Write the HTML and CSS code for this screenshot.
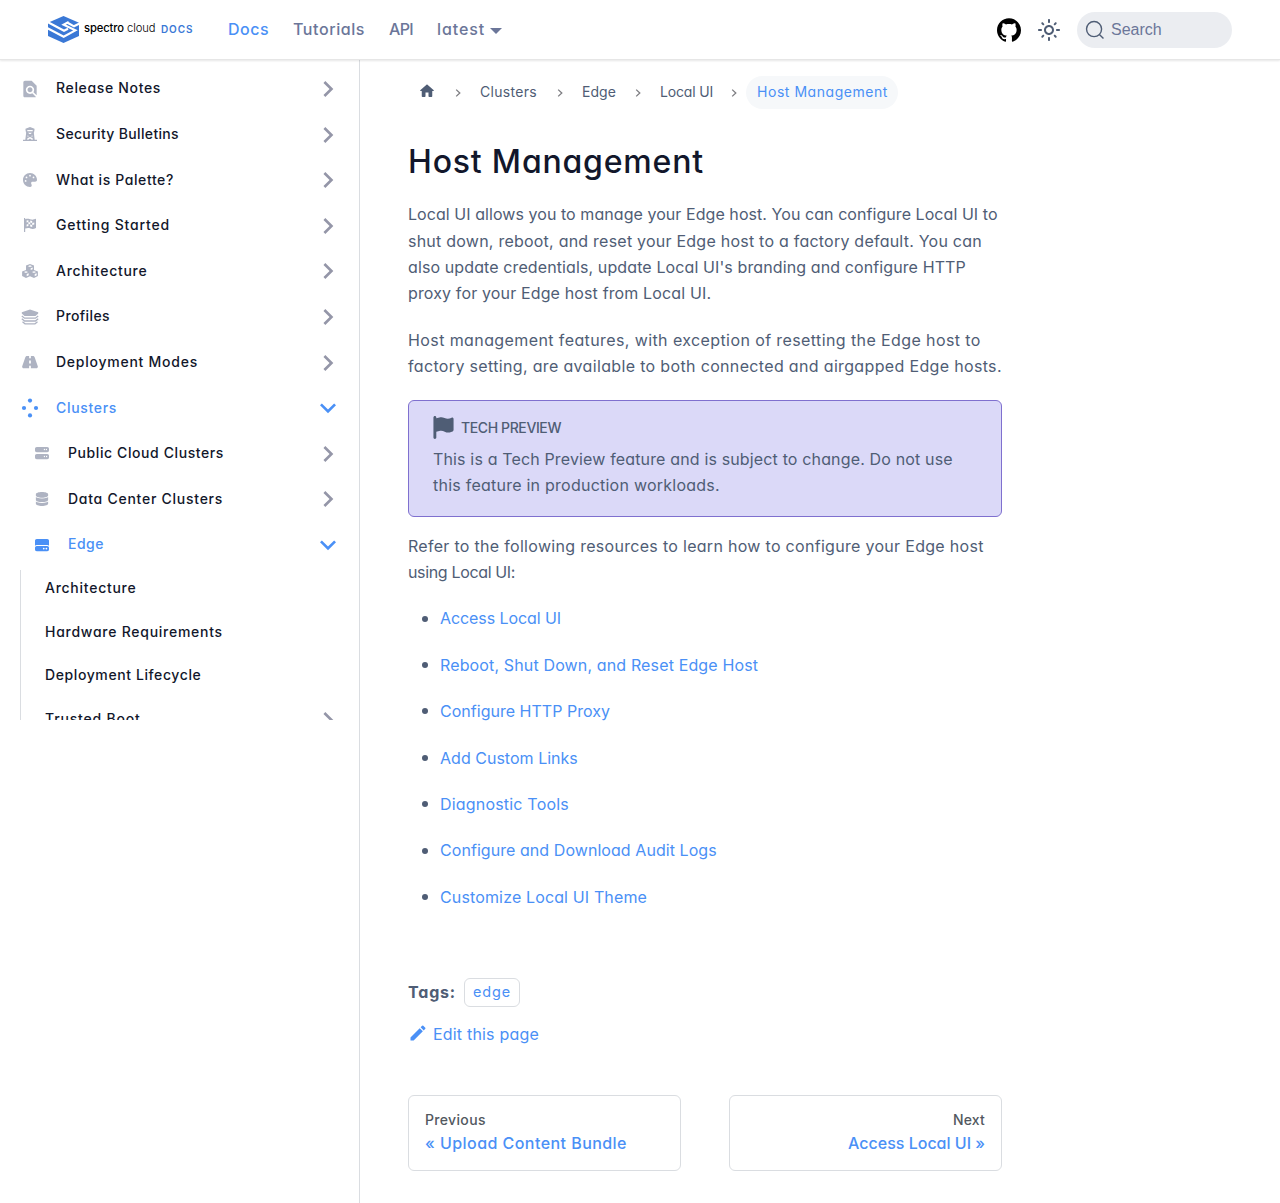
FILE: index.html
```html
<!DOCTYPE html>
<html lang="en">
<head>
<meta charset="utf-8">
<title>Host Management | Palette</title>
<link rel="stylesheet" href="styles.css">
</head>
<body>
<svg class="defs" width="0" height="0">
  <symbol id="caret" viewBox="0 0 24 24"><path d="M7.41 15.41L12 10.83l4.59 4.58L18 14l-6-6-6 6z"/></symbol>
  <symbol id="sep" viewBox="0 0 8 10"><path d="M2.2 1.6L5.8 5 2.2 8.4" fill="none" stroke="#7d7d82" stroke-width="1.3"/></symbol>
</svg>
<header class="navbar">
  <a class="brand">
    <svg class="mark" viewBox="0 0 93 81"><path fill="#3a78d6" d="M46.500 0L93 20V60L46.500 81L0 60V20z"/><path fill="none" stroke="#fff" stroke-width="6.500" d="M-3 36L47 62L82 43L47 26L62 18M96 22L78 31L60 21M-3 17L48 44L60 38"/></svg>
    <span class="word"><b>spectro</b> cloud</span><span class="docs">DOCS</span>
  </a>
  <nav class="links">
    <a class="active ls-48">Docs</a><a class="ls-58">Tutorials</a><a class="ls-m66">API</a><a class="ls-89 drop">latest</a>
  </nav>
  <div class="tools">
    <svg class="github" viewBox="0 0 24 24"><path d="M12 .297c-6.63 0-12 5.373-12 12 0 5.303 3.438 9.8 8.205 11.385.6.113.82-.258.82-.577 0-.285-.01-1.04-.015-2.04-3.338.724-4.042-1.61-4.042-1.61C4.422 18.07 3.633 17.7 3.633 17.7c-1.087-.744.084-.729.084-.729 1.205.084 1.838 1.236 1.838 1.236 1.07 1.835 2.809 1.305 3.495.998.108-.776.417-1.305.76-1.605-2.665-.3-5.466-1.332-5.466-5.93 0-1.31.465-2.38 1.235-3.22-.135-.303-.54-1.523.105-3.176 0 0 1.005-.322 3.3 1.23.96-.267 1.98-.399 3-.405 1.02.006 2.04.138 3 .405 2.28-1.552 3.285-1.23 3.285-1.23.645 1.653.24 2.873.12 3.176.765.84 1.23 1.91 1.23 3.22 0 4.61-2.805 5.625-5.475 5.92.42.36.81 1.096.81 2.22 0 1.606-.015 2.896-.015 3.286 0 .315.21.69.825.57C20.565 22.092 24 17.592 24 12.297c0-6.627-5.373-12-12-12"/></svg>
    <svg class="sun" viewBox="0 0 24 24"><path d="M12,9c1.65,0,3,1.35,3,3s-1.35,3-3,3s-3-1.35-3-3S10.35,9,12,9 M12,7c-2.76,0-5,2.24-5,5s2.24,5,5,5s5-2.24,5-5 S14.76,7,12,7L12,7z M2,13l2,0c0.55,0,1-0.45,1-1s-0.45-1-1-1l-2,0c-0.55,0-1,0.45-1,1S1.45,13,2,13z M20,13l2,0c0.55,0,1-0.45,1-1 s-0.45-1-1-1l-2,0c-0.55,0-1,0.45-1,1S19.45,13,20,13z M11,2v2c0,0.55,0.45,1,1,1s1-0.45,1-1V2c0-0.55-0.45-1-1-1S11,1.45,11,2z M11,20v2c0,0.55,0.45,1,1,1s1-0.45,1-1v-2c0-0.55-0.45-1-1-1C11.45,19,11,19.45,11,20z M5.99,4.58c-0.39-0.39-1.03-0.39-1.41,0 c-0.39,0.39-0.39,1.03,0,1.41l1.06,1.06c0.39,0.39,1.03,0.39,1.41,0s0.39-1.03,0-1.41L5.99,4.58z M18.36,16.95 c-0.39-0.39-1.03-0.39-1.41,0c-0.39,0.39-0.39,1.03,0,1.41l1.06,1.06c0.39,0.39,1.03,0.39,1.41,0c0.39-0.39,0.39-1.03,0-1.41 L18.36,16.95z M19.42,5.99c0.39-0.39,0.39-1.03,0-1.41c-0.39-0.39-1.03-0.39-1.41,0l-1.06,1.06c-0.39,0.39-0.39,1.03,0,1.41 s1.03,0.39,1.41,0L19.42,5.99z M7.05,18.36c0.39-0.39,0.39-1.03,0-1.41c-0.39-0.39-1.03-0.39-1.41,0l-1.06,1.06 c-0.39,0.39-0.39,1.03,0,1.41s1.03,0.39,1.41,0L7.05,18.36z"/></svg>
    <button class="search"><svg viewBox="0 0 20 20"><path d="M14.386 14.386l4.0877 4.0877-4.0877-4.0877c-2.9418 2.9419-7.7115 2.9419-10.6533 0-2.9419-2.9418-2.9419-7.7115 0-10.6533 2.9418-2.9419 7.7115-2.9419 10.6533 0 2.9419 2.9418 2.9419 7.7115 0 10.6533z" fill="none" stroke="currentColor" stroke-width="1.4"/></svg><span>Search</span></button>
  </div>
</header>
<div class="page">
<aside class="sidebar">
  <ul class="menu">
    <li><svg class="ic i20" viewBox="0 0 24 24"><path d="M20 19.590V8l-6-6H6c-1.100 0-1.990.9-1.990 2L4 20c0 1.100.89 2 1.990 2H18c.45 0 .85-.15 1.190-.4l-4.430-4.430c-.8.52-1.740.83-2.760.83-2.760 0-5-2.240-5-5s2.240-5 5-5 5 2.240 5 5c0 1.020-.31 1.960-.83 2.750L20 19.590zM9 13c0 1.660 1.340 3 3 3s3-1.340 3-3-1.340-3-3-3-3 1.340-3 3z"/></svg><span class="ls-66">Release Notes</span><svg class="caret"><use href="#caret"/></svg></li>
    <li><svg class="ic i14" viewBox="0 0 14 14"><path fill-rule="evenodd" d="M7 0L11.500 1.700V3L11 5.600H10.800L11.700 12.700H14V14H0V12.700H2.300L3.200 5.600H3L2.500 3V1.700zM4.300 3.100V4.300H9.700V3.100zM5.100 5.800L6.300 7H7.700L8.900 5.800zM4.700 8.200L4.500 9.800L5.900 9.200zM9.300 8.200L8.100 9.200L9.500 9.800zM7 9.900L4.400 11.200L4.200 12.700H5.200L7 11.500L8.800 12.700H9.800L9.600 11.200z"/></svg><span class="ls-34">Security Bulletins</span><svg class="caret"><use href="#caret"/></svg></li>
    <li><svg class="ic i14" viewBox="0 0 512 512"><path d="M512 256c0 .9 0 1.800 0 2.700c-.4 36.500-33.600 61.300-70.100 61.300L344 320c-26.500 0-48 21.500-48 48c0 3.400 .4 6.700 1 9.900c2.100 10.200 6.500 20 10.800 29.900c6.100 13.800 12.100 27.500 12.100 42c0 31.800-21.600 60.700-53.400 62c-3.500 .1-7 .2-10.600 .2C114.600 512 0 397.400 0 256S114.600 0 256 0S512 114.600 512 256zM128 288a32 32 0 1 0 -64 0 32 32 0 1 0 64 0zm0-96a32 32 0 1 0 0-64 32 32 0 1 0 0 64zM288 96a32 32 0 1 0 -64 0 32 32 0 1 0 64 0zm96 96a32 32 0 1 0 0-64 32 32 0 1 0 0 64z"/></svg><span class="ls-60">What is Palette?</span><svg class="caret"><use href="#caret"/></svg></li>
    <li><svg class="ic i14" viewBox="0 0 14 14"><path fill-rule="evenodd" d="M1 0H2.200V1.200C5 .2 6.500 1.200 8 1.500C9.800 1.900 11.200 1.300 13 .8V10C11 10.900 9.300 11.200 7.400 10.500C5.600 9.900 4.200 10 2.200 10.600V14H1zM3.600 2.500V4.500L5.400 4.100V2.200zM7.200 2.500V4.500L9.200 4.900V2.900zM5.400 4.100V6L7.200 6.300V4.500zM9.200 4.900V6.900L11.300 6.400V4.400zM3.600 6.500V8.500L5.400 8.100V6zM7.200 6.400V8.400L9.200 8.900V6.900z"/></svg><span class="ls-82">Getting Started</span><svg class="caret"><use href="#caret"/></svg></li>
    <li><svg class="ic i16" viewBox="0 0 16 14"><path fill-rule="evenodd" d="M8 0L12 1.600V6L15.900 7.600V12L12 14L8 12.300L4 14L.1 12V7.600L4 6V1.600zM5.900 2.200L8 3L10.100 2.200L8 1.300zM8.700 4.200V6L10.700 5.200V3.400zM1.900 8.100L4 8.900L6.100 8.100L4 7.200zM9.900 8.100L12 8.900L14.100 8.100L12 7.200zM4.700 10.100V12.200L6.700 11.300V9.300zM12.700 10.100V12.200L14.700 11.300V9.300z"/></svg><span class="ls-74">Architecture</span><svg class="caret"><use href="#caret"/></svg></li>
    <li><svg class="ic i18" viewBox="0 0 18 16"><path d="M9 .5L17.200 3.300V4.600L14.500 7H3.500L.8 4.600V3.300z"/><path d="M.8 7L3.600 9.200H14.400L17.200 7M.8 9.800L3.600 12H14.400L17.200 9.800M1.500 12.800L4 14.800H14L16.500 12.800" fill="none" stroke="#aeb3c2" stroke-width="1.300"/></svg><span class="ls-40">Profiles</span><svg class="caret"><use href="#caret"/></svg></li>
    <li><svg class="ic i16" viewBox="0 0 576 512"><path d="M256 32H181.200c-27.100 0-51.300 17.100-60.300 42.600L3.100 407.200C1.100 413 0 419.200 0 425.400C0 455.500 24.500 480 54.600 480H256V416c0-17.700 14.300-32 32-32s32 14.300 32 32v64H521.400c30.200 0 54.600-24.500 54.600-54.600c0-6.200-1.100-12.400-3.100-18.200L455.100 74.600C446 49.100 421.900 32 394.800 32H320V96c0 17.700-14.300 32-32 32s-32-14.300-32-32V32zm64 192v64c0 17.700-14.300 32-32 32s-32-14.300-32-32V224c0-17.700 14.300-32 32-32s32 14.300 32 32z"/></svg><span class="ls-75">Deployment Modes</span><svg class="caret"><use href="#caret"/></svg></li>
    <li class="open"><svg class="ic dots" viewBox="0 0 18 20"><circle cx="9" cy="2.600" r="2.100"/><circle cx="3" cy="10" r="2.100"/><circle cx="15" cy="10" r="2.100"/><circle cx="9" cy="17.400" r="2.100"/></svg><span class="ls-68">Clusters</span><svg class="caret"><use href="#caret"/></svg></li>
    <li class="sub"><svg class="ic i14" viewBox="0 0 512 512"><path d="M64 32C28.700 32 0 60.700 0 96v64c0 35.300 28.700 64 64 64H448c35.300 0 64-28.700 64-64V96c0-35.300-28.700-64-64-64H64zm280 72a24 24 0 1 1 0 48 24 24 0 1 1 0-48zm48 24a24 24 0 1 1 48 0 24 24 0 1 1 -48 0zM64 288c-35.300 0-64 28.700-64 64v64c0 35.300 28.700 64 64 64H448c35.300 0 64-28.700 64-64V352c0-35.300-28.700-64-64-64H64zm280 72a24 24 0 1 1 0 48 24 24 0 1 1 0-48zm56 24a24 24 0 1 1 48 0 24 24 0 1 1 -48 0z"/></svg><span class="ls-59">Public Cloud Clusters</span><svg class="caret"><use href="#caret"/></svg></li>
    <li class="sub"><svg class="ic i14" viewBox="0 0 448 512"><path d="M448 80v48c0 44.200-100.300 80-224 80S0 172.200 0 128V80C0 35.800 100.300 0 224 0S448 35.800 448 80zM393.200 214.700c20.800-7.400 39.900-16.900 54.800-28.600V288c0 44.200-100.300 80-224 80S0 332.200 0 288V186.100c14.900 11.800 34 21.200 54.800 28.600C99.700 230.700 159.500 240 224 240s124.300-9.300 169.200-25.300zM0 346.100c14.900 11.800 34 21.200 54.800 28.600C99.700 390.700 159.500 400 224 400s124.300-9.300 169.200-25.300c20.800-7.400 39.900-16.900 54.800-28.600V432c0 44.200-100.300 80-224 80S0 476.200 0 432V346.100z"/></svg><span class="ls-74">Data Center Clusters</span><svg class="caret"><use href="#caret"/></svg></li>
    <li class="sub open"><svg class="ic i14" viewBox="0 0 512 512"><path d="M0 96C0 60.700 28.700 32 64 32H448c35.300 0 64 28.700 64 64V280.400c-17-15.200-39.400-24.400-64-24.400H64c-24.600 0-47 9.200-64 24.400V96zM64 288H448c35.300 0 64 28.700 64 64v64c0 35.300-28.700 64-64 64H64c-35.300 0-64-28.700-64-64V352c0-35.300 28.700-64 64-64zM320 416a32 32 0 1 0 0-64 32 32 0 1 0 0 64zm128-32a32 32 0 1 0 -64 0 32 32 0 1 0 64 0z"/></svg><span class="ls-50">Edge</span><svg class="caret"><use href="#caret"/></svg></li>
  </ul>
  <ul class="leaves">
    <li><span class="ls-74">Architecture</span></li>
    <li><span class="ls-74">Hardware Requirements</span></li>
    <li><span class="ls-60">Deployment Lifecycle</span></li>
    <li><span class="ls-82">Trusted Boot</span><svg class="caret"><use href="#caret"/></svg></li>
  </ul>
</aside>
<main class="content">
  <nav class="crumbs">
    <a><svg class="home" viewBox="0 0 24 24"><path d="M10 19v-5h4v5c0 .55.45 1 1 1h3c.55 0 1-.45 1-1v-7h1.700c.46 0 .68-.57.33-.87L12.670 3.600c-.38-.34-.96-.34-1.340 0l-8.360 7.530c-.34.3-.13.87.33.87H5v7c0 .55.45 1 1 1h3c.55 0 1-.45 1-1z"/></svg></a>
    <svg class="sep"><use href="#sep"/></svg><a class="ls-30">Clusters</a>
    <svg class="sep"><use href="#sep"/></svg><a class="ls-6">Edge</a>
    <svg class="sep"><use href="#sep"/></svg><a class="ls-m17">Local UI</a>
    <svg class="sep last"><use href="#sep"/></svg><a class="current ls-54">Host Management</a>
  </nav>
  <h1>Host Management</h1>
  <p><span class="ls-6">Local UI allows you to manage your Edge host. You can configure Local UI to</span> <span class="ls-23">shut down, reboot, and reset your Edge host to a factory default. You can</span> <span class="ls-11">also update credentials, update Local UI's branding and configure HTTP</span> <span class="ls-14">proxy for your Edge host from Local UI.</span></p>
  <p><span class="ls-40">Host management features, with exception of resetting the Edge host to</span> <span class="ls-34">factory setting, are available to both connected and airgapped Edge hosts.</span></p>
  <section class="admonition">
    <h5><svg viewBox="0 0 448 512"><path d="M64 32C64 14.300 49.700 0 32 0S0 14.300 0 32V64 368 480c0 17.700 14.300 32 32 32s32-14.300 32-32V352l64.300-16.100c41.100-10.300 84.600-5.500 122.500 13.400c44.200 22.100 95.500 24.800 141.700 7.400l34.700-13c12.500-4.700 20.800-16.600 20.800-30V66.100c0-23-24.200-38-44.800-27.700l-9.600 4.800c-46.300 23.200-100.800 23.200-147.100 0c-35.100-17.600-75.400-22-113.500-12.500L64 48V32z"/></svg><span class="ls-m39">TECH PREVIEW</span></h5>
    <p><span class="ls-15">This is a Tech Preview feature and is subject to change. Do not use</span> <span class="ls-24">this feature in production workloads.</span></p>
  </section>
  <p><span class="ls-30">Refer to the following resources to learn how to configure your Edge host</span> <span class="ls-m35">using Local UI:</span></p>
  <ul class="list">
    <li><a class="ls-m8">Access Local UI</a></li>
    <li><a class="ls-14">Reboot, Shut Down, and Reset Edge Host</a></li>
    <li><a class="ls-2">Configure HTTP Proxy</a></li>
    <li><a class="ls-2">Add Custom Links</a></li>
    <li><a class="ls-19">Diagnostic Tools</a></li>
    <li><a class="ls-6">Configure and Download Audit Logs</a></li>
    <li><a class="ls-14">Customize Local UI Theme</a></li>
  </ul>
  <footer>
    <div class="tags"><b class="ls-82">Tags:</b><a class="tag ls-89">edge</a></div>
    <a class="edit"><svg viewBox="0 0 40 40"><path d="m34.500 11.700l-3 3.100-6.300-6.300 3.100-3q0.500-0.500 1.200-0.500t1.100 0.500l3.900 3.900q0.500 0.400 0.500 1.100t-0.500 1.200z m-29.500 17.100l18.400-18.500 6.300 6.300-18.400 18.400h-6.300v-6.200z"/></svg><span class="ls-19">Edit this page</span></a>
  </footer>
  <nav class="pager">
    <a><small class="ls-34">Previous</small><strong class="ls-45">« Upload Content Bundle</strong></a>
    <a class="next"><small class="ls-19">Next</small><strong>Access Local UI »</strong></a>
  </nav>
</main>
</div>
</body>
</html>
```
FILE: styles.css
```css
* { box-sizing: border-box; }
body { margin: 0; background: #fff; color: #4f5d75; font: 400 16px/26.4px Inter, "Open Sans", sans-serif; font-feature-settings: "cv11"; }
ul { list-style: none; margin: 0; padding: 0; }
svg { fill: currentColor; flex: none; }
.defs { position: absolute; }

/* Top bar */
.navbar { position: relative; z-index: 2; height: 60px; padding: 0 48px; display: flex; align-items: center; background: #fff; box-shadow: 0 1px 2px rgba(0,0,0,.1); border-bottom: 1px solid #e6e6e6; }
.brand { display: flex; align-items: center; width: 168px; }
.mark { width: 31px; height: 27px; margin-right: 5px; }
.word { font-size: 11.2px; font-weight: 300; color: #000; line-height: 20px; margin-top: -3px; white-space: nowrap; width: 77px; letter-spacing: -.1px; }
.word b { font-weight: 500; }
.docs { font-size: 10px; font-weight: 600; color: #3a78d6; line-height: 20px; letter-spacing: .9px; margin-top: -2px; }
.links { display: flex; gap: 24px; margin-left: 12px; font-weight: 500; color: #6b7699; }
.links a:nth-child(1) { width: 41px; }
.links a:nth-child(2) { width: 72px; }
.links a:nth-child(3) { width: 24px; }
.links .active { color: #4a90f6; }
.drop { display: flex; align-items: center; }
.drop::after { content: ""; border: 6.4px solid transparent; border-top-color: currentColor; border-bottom: 0; margin: 3px 0 0 5px; }
.tools { margin-left: auto; display: flex; align-items: center; }
.github { width: 24px; height: 24px; color: #000; }
.sun { width: 24px; height: 24px; margin: 0 16px; }
.search { width: 155px; height: 36px; border: 0; border-radius: 18px; padding: 0 8px; background: #ebedf1; display: flex; align-items: center; gap: 6px; font: 16px "Liberation Sans", Arial, sans-serif; color: #6b7699; }
.search svg { width: 20px; height: 20px; color: #4f5d75; }

/* Sidebar */
.page { display: flex; height: 1143px; background: linear-gradient(#dadde1, #dadde1) 359px 0 / 1px 100% no-repeat; }
.sidebar { width: 360px; flex: none; height: 660px; overflow: hidden; padding-top: 5.800px; font-size: 14px; font-weight: 500; color: #12172b; }
.menu li { height: 45.600px; display: flex; align-items: center; padding: 0 16px 0 20px; }
.menu li span { margin-left: 16px; }
.menu .sub { padding-left: 32px; }
.ic { width: 20px; color: #aeb3c2; }
.i20 { height: 20px; }
.i14, .i16 { height: 14px; }
.i18 { height: 16px; }
.dots { height: 20px; }
.caret { width: 32px; height: 32px; margin: 1px 0 0 auto; color: #9496a8; transform: rotate(90deg); }
.open, .open .ic { color: #4a90f6; }
.open .caret { color: #4a90f6; transform: rotate(180deg); }
.leaves { margin: 2.600px 0 0 20px; padding: .6px 0 0 24px; border-left: 1px solid #dadde1; display: flex; flex-direction: column; gap: 8px; }
.leaves li { height: 35.600px; display: flex; align-items: center; padding-right: 16px; }

/* Article */
.content { width: 642px; padding: 16px 0 0 48px; }
.crumbs { display: flex; align-items: center; height: 33px; font-size: 14px; }
.crumbs a { height: 33px; line-height: 32px; white-space: nowrap; }
.home { display: block; width: 18px; height: 18px; margin: 6px 0 0 10px; }
.sep { width: 8px; height: 10px; margin: 1px 18px 0; }
.crumbs .ls-30 { width: 58px; }
.crumbs .ls-6 { width: 34px; }
.crumbs .ls-m17 { width: 52px; }
.last { margin-right: 8px; }
.current { color: #4a90f6; background: #f6f8fa; border-radius: 17px; width: 152px; padding-left: 11px; }
h1 { margin: 33px 0 19.200px; font-size: 32px; line-height: 40px; font-weight: 500; color: #12172b; letter-spacing: .81px; }
p { margin: 0 0 20px; }
p span { display: block; white-space: nowrap; }
.admonition { height: 117px; margin-bottom: 16px; padding: 14px 24px; border: 1px solid #7f70cf; border-radius: 6px; background: #dbd9f8; }
.admonition h5 { display: flex; align-items: center; gap: 7px; margin: 0 0 5px; font-size: 14px; font-weight: 500; }
.admonition svg { width: 21px; height: 23px; }
.list li { display: flex; align-items: center; margin-bottom: 20px; padding-left: 14px; color: #4a90f6; }
.list li::before { content: ""; width: 6px; height: 6px; border-radius: 50%; background: #4f5d75; margin-right: 12px; }
footer { margin-top: 67.500px; }
.tags { display: flex; align-items: center; height: 29px; gap: 8px; }
.tags b { width: 48px; }
.tag { width: 56px; height: 29px; border: 1px solid #dadde1; border-radius: 6px; padding-left: 8px; font-size: 14.400px; color: #4a90f6; }
.edit { display: flex; align-items: center; gap: 5px; height: 26px; margin-top: 14px; color: #4a90f6; }
.edit svg { width: 20px; height: 20px; margin-top: -2px; }
.pager { display: grid; grid-template-columns: 1fr 1fr; gap: 48px; margin-top: 48px; }
.pager a { height: 76px; padding: 14px 16px; border: 1px solid #dadde1; border-radius: 6px; }
.pager small, .pager strong { display: block; font-weight: 500; }
.pager small { font-size: 14px; line-height: 20px; color: #525860; }
.pager strong { color: #4a90f6; }
.next { text-align: right; }

/* Tracking steps, in hundredths of a pixel */
.ls-m66 { letter-spacing: -.66px; }
.ls-m39 { letter-spacing: -.39px; }
.ls-m35 { letter-spacing: -.35px; }
.ls-m17 { letter-spacing: -.17px; }
.ls-m8 { letter-spacing: -.08px; }
.ls-2 { letter-spacing: .02px; }
.ls-6 { letter-spacing: .06px; }
.ls-11 { letter-spacing: .11px; }
.ls-14 { letter-spacing: .14px; }
.ls-15 { letter-spacing: .15px; }
.ls-19 { letter-spacing: .19px; }
.ls-23 { letter-spacing: .23px; }
.ls-24 { letter-spacing: .24px; }
.ls-30 { letter-spacing: .3px; }
.ls-34 { letter-spacing: .34px; }
.ls-40 { letter-spacing: .4px; }
.ls-45 { letter-spacing: .45px; }
.ls-48 { letter-spacing: .48px; }
.ls-50 { letter-spacing: .5px; }
.ls-54 { letter-spacing: .54px; }
.ls-58 { letter-spacing: .58px; }
.ls-59 { letter-spacing: .59px; }
.ls-60 { letter-spacing: .6px; }
.ls-66 { letter-spacing: .66px; }
.ls-68 { letter-spacing: .68px; }
.ls-74 { letter-spacing: .74px; }
.ls-75 { letter-spacing: .75px; }
.ls-82 { letter-spacing: .82px; }
.ls-89 { letter-spacing: .89px; }
```
